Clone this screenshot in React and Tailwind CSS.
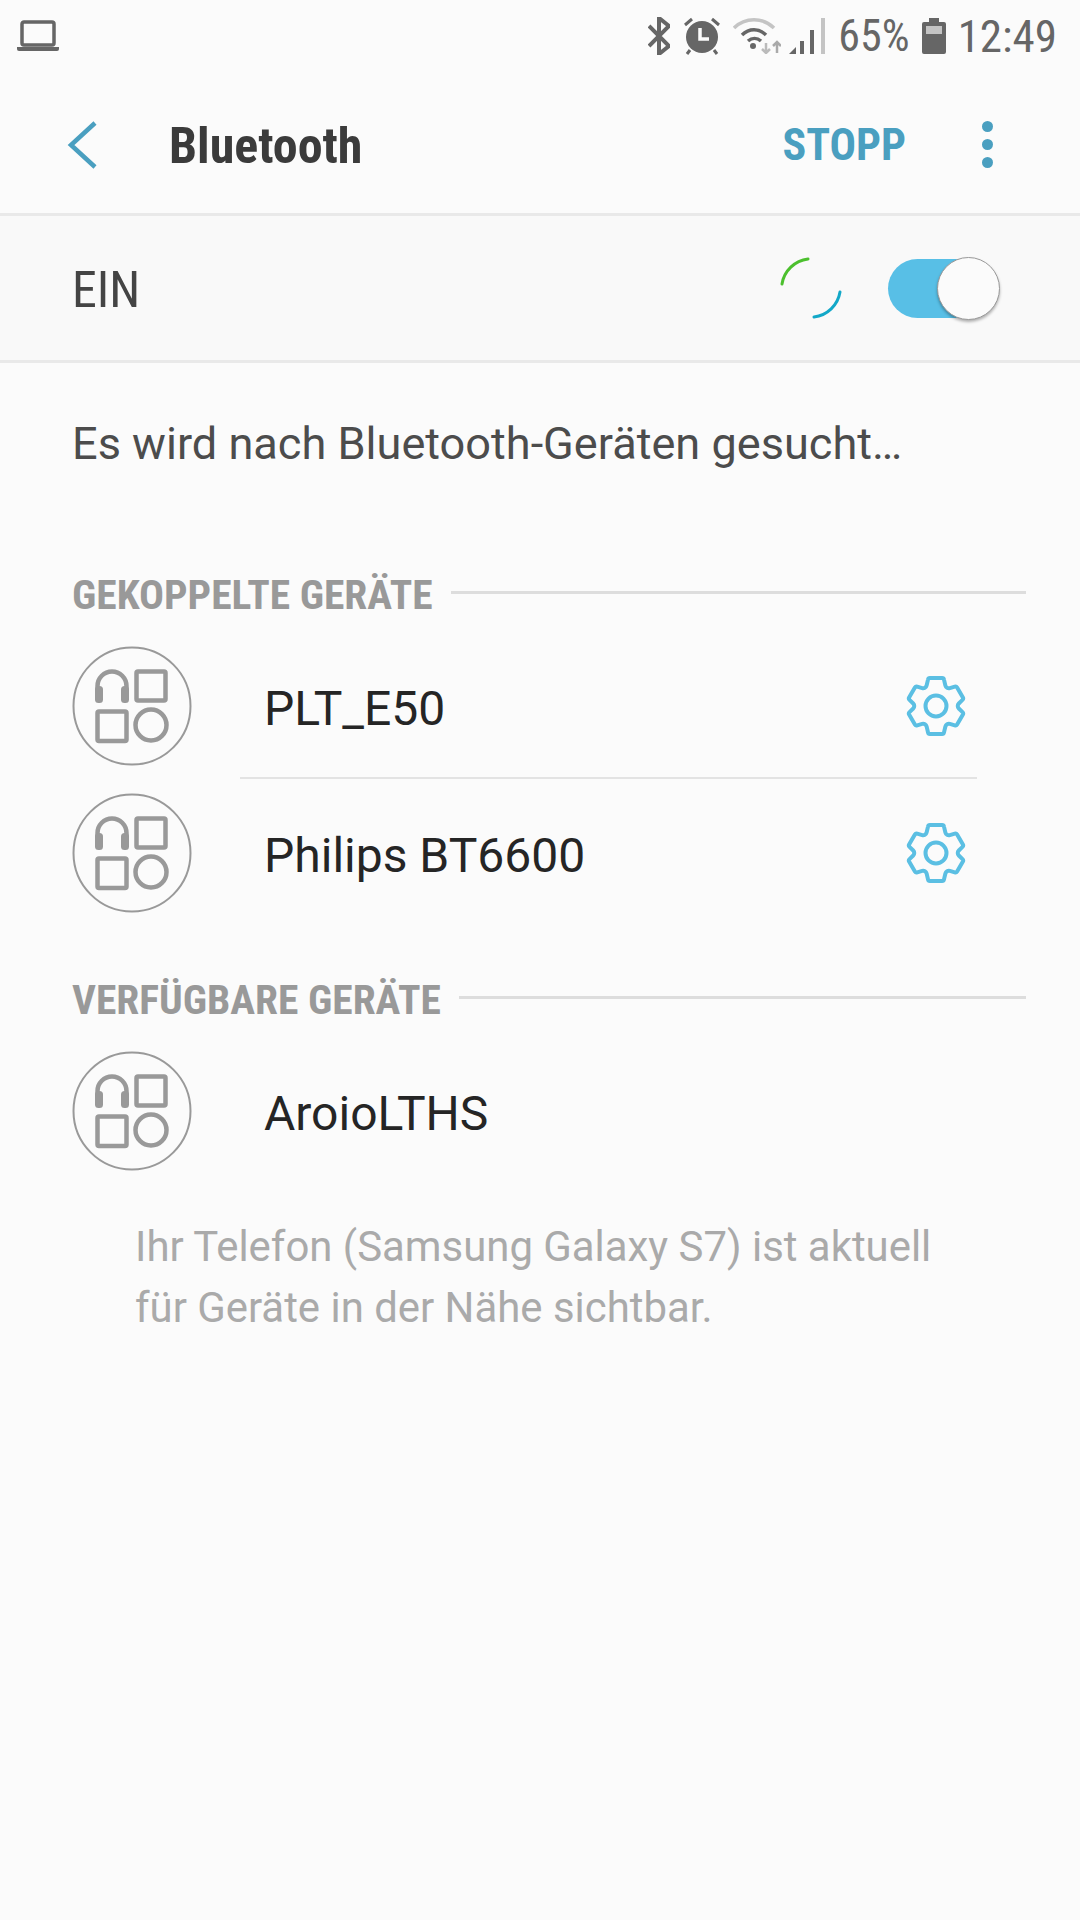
const FONT = 'font-[Roboto,sans-serif]'

function DeviceIcon() {
  return (
    <svg width="120" height="120" viewBox="0 0 120 120" fill="none" className="shrink-0">
      <circle cx="60" cy="60" r="58.500" stroke="#999" strokeWidth="2" />
      <path d="M25.500 46V40a14.500 14.500 0 0 1 29 0v6" stroke="#999" strokeWidth="4.500" />
      <rect x="23" y="40" width="8" height="17" rx="3.500" fill="#999" />
      <rect x="49" y="40" width="8" height="17" rx="3.500" fill="#999" />
      <rect x="64.500" y="25.500" width="29" height="29" rx="1.500" stroke="#999" strokeWidth="4.500" />
      <rect x="25.500" y="65.500" width="29" height="29.500" rx="1.500" stroke="#999" strokeWidth="4.500" />
      <circle cx="79" cy="79" r="15.500" stroke="#999" strokeWidth="4.500" />
    </svg>
  )
}

function Gear() {
  return (
    <svg width="60" height="62" viewBox="0 0 60 62" fill="none" className="shrink-0">
      <path
        d="M24 3h12a2 2 0 0 1 2 1.600l1.400 6a3.500 3.500 0 0 0 4.400 2.500l5-1.500a2 2 0 0 1 2.300.9l5.800 10a2 2 0 0 1-.4 2.400l-3.700 3.600a3.500 3.500 0 0 0 0 5l3.700 3.600a2 2 0 0 1 .4 2.400l-5.800 10a2 2 0 0 1-2.300.9l-5-1.500a3.500 3.500 0 0 0-4.400 2.500l-1.400 6A2 2 0 0 1 36 59H24a2 2 0 0 1-2-1.600l-1.400-6a3.500 3.500 0 0 0-4.400-2.500l-5 1.500a2 2 0 0 1-2.300-.9l-5.800-10a2 2 0 0 1 .4-2.400l3.700-3.600a3.500 3.500 0 0 0 0-5l-3.700-3.600a2 2 0 0 1-.4-2.400l5.800-10a2 2 0 0 1 2.300-.9l5 1.500a3.500 3.500 0 0 0 4.400-2.500l1.400-6A2 2 0 0 1 24 3z"
        stroke="#5bbfe3"
        strokeWidth="4"
      />
      <circle cx="30" cy="31" r="10.500" stroke="#5bbfe3" strokeWidth="4" />
    </svg>
  )
}

function SectionHeader({ title }) {
  return (
    <div className="flex items-center h-[40px]">
      <span className="text-[41.5px] font-bold leading-none text-[#999999] whitespace-nowrap [font-stretch:75%]">{title}</span>
      <div className="flex-1 h-[3px] bg-[#dddddd] ml-[18px] mb-[5px]" />
    </div>
  )
}

function DeviceRow({ name, settings }) {
  return (
    <div className="flex items-center h-[120px]">
      <DeviceIcon />
      <span className="ml-[72px] mt-[5px] flex-1 text-[48px] leading-none text-[#252525]">{name}</span>
      {settings && <div className="mr-[60px] flex"><Gear /></div>}
    </div>
  )
}

function StatusBar() {
  return (
    <div className="h-[72px] flex items-center pl-[17px] pr-[23px] text-[#666666]">
      <svg width="42" height="32" viewBox="0 0 42 32" fill="none">
        <rect x="5" y="2" width="32" height="23" rx="2" stroke="#666" strokeWidth="3.500" />
        <path d="M0 27h42v2a2 2 0 0 1-2 2H2a2 2 0 0 1-2-2z" fill="#666" />
      </svg>
      <div className="ml-auto flex items-center">
        <svg width="22" height="38" viewBox="0 0 22 38" fill="none" stroke="#666" strokeWidth="4">
          <path d="M1 9l20 20-10 8V1l10 8L1 29" />
        </svg>
        <svg width="36" height="38" viewBox="0 0 36 38" fill="none" className="ml-[14px]">
          <circle cx="18" cy="20" r="16" fill="#666" />
          <path d="M16 11v11h9" stroke="#fbfbfb" strokeWidth="3.500" />
          <path d="M1 8l7-6M35 8l-7-6M6 33l-3 4M30 33l3 4" stroke="#666" strokeWidth="3" />
        </svg>
        <svg width="48" height="36" viewBox="0 0 48 36" fill="none" className="ml-[13px]">
          <path d="M1 10c11-11 29-11 40 0" stroke="#c4c4c4" strokeWidth="3.500" />
          <path d="M9 17c7-7 17-7 24 0" stroke="#666" strokeWidth="3.500" />
          <path d="M15 23c4-3.500 9-3.500 13 0" stroke="#666" strokeWidth="3.500" />
          <circle cx="20" cy="28" r="3" fill="#666" />
          <path d="M33 25v10M29 31l4 4 4-4" stroke="#bbb" strokeWidth="2.500" />
          <path d="M44 35V24M40 28l4-4 4 4" stroke="#aaa" strokeWidth="2.500" />
        </svg>
        <svg width="36" height="36" viewBox="0 0 36 36" className="ml-[8px]">
          <path d="M0 36l7-7v7z" fill="#666" />
          <rect x="11" y="23" width="4" height="13" fill="#666" />
          <rect x="21" y="12" width="4" height="24" fill="#666" />
          <rect x="32" y="0" width="4" height="36" fill="#c4c4c4" />
        </svg>
        <span className="ml-[13px] text-[44px] leading-none [font-stretch:75%]">65%</span>
        <svg width="24" height="36" viewBox="0 0 24 36" className="ml-[12px]">
          <path d="M7 0h10v4h5a2 2 0 0 1 2 2v28a2 2 0 0 1-2 2H2a2 2 0 0 1-2-2V6a2 2 0 0 1 2-2h5z" fill="#666" />
          <rect x="4" y="8" width="16" height="8" fill="#c4c4c4" />
        </svg>
        <span className="ml-[12px] text-[45px] leading-none [font-stretch:75%]">12:49</span>
      </div>
    </div>
  )
}

export default function App() {
  return (
    <div className={`${FONT} w-[1080px] h-[1920px] bg-[#fbfbfb] overflow-hidden`}>
      <StatusBar />

      {/* toolbar */}
      <div className="h-[144px] flex items-center border-b-[3px] border-[#e9e9e9] pt-[4px]">
        <svg width="32" height="50" viewBox="0 0 32 50" fill="none" className="ml-[66px]">
          <path d="M29 3L5 25l24 22" stroke="#4a9fc0" strokeWidth="4.500" />
        </svg>
        <span className="ml-[71px] mt-[2px] text-[50px] font-bold leading-none text-[#3b3b3b] [font-stretch:75%]">Bluetooth</span>
        <span className="ml-auto text-[44px] font-bold leading-none text-[#4a9fc0] [font-stretch:75%]">STOPP</span>
        <div className="ml-[76px] mr-[87px] flex flex-col gap-[7px]">
          <div className="w-[11px] h-[11px] rounded-full bg-[#4a9fc0]" />
          <div className="w-[11px] h-[11px] rounded-full bg-[#4a9fc0]" />
          <div className="w-[11px] h-[11px] rounded-full bg-[#4a9fc0]" />
        </div>
      </div>

      {/* switch row */}
      <div className="h-[147px] flex items-center bg-[#f9f9f9] border-b-[3px] border-[#e9e9e9] pl-[72px]">
        <span className="mt-[3px] text-[50px] leading-none text-[#444444] [font-stretch:75%]">EIN</span>
        <svg width="64" height="64" viewBox="0 0 64 64" fill="none" className="ml-auto">
          <path d="M3 28A30 30 0 0 1 29 3" stroke="#4cc02e" strokeWidth="3" strokeLinecap="round" />
          <path d="M61 36A30 30 0 0 1 35 61" stroke="#13a8c8" strokeWidth="3" strokeLinecap="round" />
        </svg>
        <div className="relative ml-[45px] mr-[95px] w-[97px] h-[59px] rounded-full bg-[#58bfe6]">
          <div className="absolute -right-[15px] -top-[2px] w-[63px] h-[63px] rounded-full bg-[#fbfbfb] border border-[#999999] shadow-[0_2px_3px_rgba(0,0,0,0.3)]" />
        </div>
      </div>

      <p className="ml-[72px] mt-[55px] text-[45.1px] leading-[52px] text-[#4c4c4c]">Es wird nach Bluetooth-Geräten gesucht…</p>

      <div className="ml-[72px] mr-[54px] mt-[105px]">
        <SectionHeader title="GEKOPPELTE GERÄTE" />
        <div className="mt-[31px]"><DeviceRow name="PLT_E50" settings /></div>
        <div className="ml-[168px] mr-[49px] mt-[11px] h-[2px] bg-[#e3e3e3]" />
        <div className="mt-[14px]"><DeviceRow name="Philips BT6600" settings /></div>
        <div className="mt-[67px]"><SectionHeader title="VERFÜGBARE GERÄTE" /></div>
        <div className="mt-[31px]"><DeviceRow name="AroioLTHS" /></div>
      </div>

      <p className="ml-[135px] mt-[45px] w-[860px] text-[41.9px] leading-[61px] text-[#aaaaaa]">
        Ihr Telefon (Samsung Galaxy S7) ist aktuell<br />für Geräte in der Nähe sichtbar.
      </p>
    </div>
  )
}
